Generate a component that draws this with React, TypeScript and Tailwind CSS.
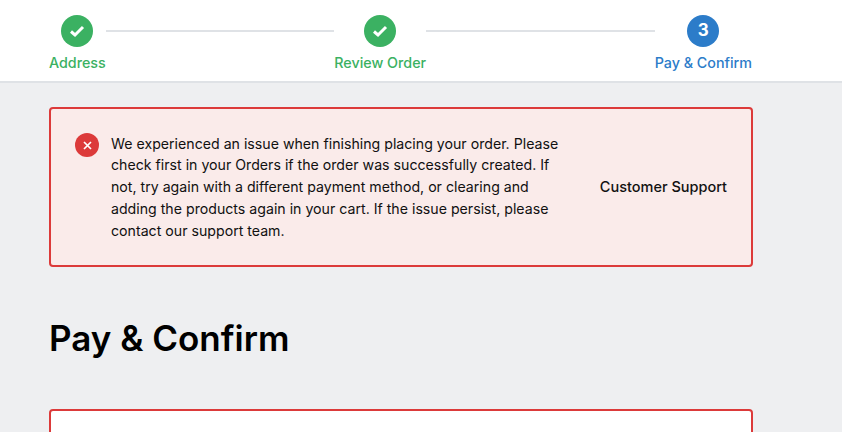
import React from 'react';

const font = { fontFamily: 'Inter, "Noto Sans", sans-serif' };

function CheckStep({ label }: { label: string }) {
  return (
    <div className="flex flex-col items-center">
      <div className="w-8 h-8 rounded-full bg-[#3bb162] flex items-center justify-center">
        <svg width="16" height="14" viewBox="0 0 16 14" fill="none">
          <path d="M2 7.5L6 11L14 3" stroke="white" strokeWidth="3" />
        </svg>
      </div>
      <span className="mt-[7px] text-[14.3px] leading-[18px] font-medium text-[#3bb162] whitespace-nowrap">{label}</span>
    </div>
  );
}

export default function App() {
  return (
    <div style={font} className="w-[842px] h-[432px] overflow-hidden bg-[#eeeff1]">
      {/* Stepper */}
      <div className="h-[83px] bg-white border-b-2 border-[#dfe2e6] pl-[49px] pt-[15px]">
        <div className="w-[703px] flex items-start">
          <CheckStep label="Address" />
          <div className="flex-1 h-[2px] mt-[15px] bg-[#dfe2e6]" />
          <CheckStep label="Review Order" />
          <div className="flex-1 h-[2px] mt-[15px] bg-[#dfe2e6]" />
          <div className="flex flex-col items-center">
            <div className="w-8 h-8 rounded-full bg-[#2c7cc9] flex items-center justify-center text-white text-[17px] font-bold">3</div>
            <span className="mt-[7px] text-[14.3px] leading-[18px] font-medium text-[#2c7cc9] whitespace-nowrap">Pay &amp; Confirm</span>
          </div>
        </div>
      </div>

      <div className="pl-[49px] pt-6 w-[753px]">
        {/* Error alert */}
        <div className="h-[160px] border-2 border-[#dc3a3a] rounded bg-[#faebea] flex items-center px-6">
          <div className="w-6 h-6 self-start mt-6 rounded-full bg-[#dc3a3a] flex items-center justify-center shrink-0">
            <svg width="9" height="9" viewBox="0 0 9 9" fill="none">
              <path d="M1 1L8 8M8 1L1 8" stroke="white" strokeWidth="1.7" />
            </svg>
          </div>
          <p className="ml-3 w-[458px] text-[14.17px] leading-[21.75px] text-[#111]">
            We experienced an issue when finishing placing your order. Please check first in your Orders if the order was successfully created. If not, try again with a different payment method, or clearing and adding the products again in your cart. If the issue persist, please contact our support team.
          </p>
          <span className="ml-auto text-[14.5px] font-medium text-[#111] whitespace-nowrap">Customer Support</span>
        </div>

        <h1 className="mt-12 text-[35px] leading-[46px] font-semibold text-black">Pay &amp; Confirm</h1>

        {/* Next card */}
        <div className="mt-12 h-[120px] bg-white border-2 border-[#dc3a3a] rounded" />
      </div>
    </div>
  );
}
